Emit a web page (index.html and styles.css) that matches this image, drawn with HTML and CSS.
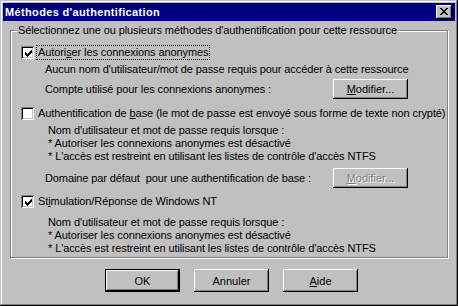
FILE: index.html
```html
<!DOCTYPE html>
<html lang="fr">
<head>
    <meta charset="UTF-8">
    <title>Méthodes d'authentification</title>
    <link rel="stylesheet" href="styles.css">
</head>
<body>

<div class="fenetre">
    <!-- Barre de titre -->
    <div class="titre">
        <span class="titreTexte">Méthodes d'authentification</span>
        <button type="button" class="fermer">
            <svg width="8" height="7" viewBox="0 0 8 7" shape-rendering="crispEdges">
                <path d="M0 0h2v1h-2z M6 0h2v1h-2z M1 1h2v1h-2z M5 1h2v1h-2z M2 2h4v1h-4z M3 3h2v1h-2z M2 4h4v1h-4z M1 5h2v1h-2z M5 5h2v1h-2z M0 6h2v1h-2z M6 6h2v1h-2z" fill="#000"/>
            </svg>
        </button>
    </div>

    <div class="contenu">
        <div class="groupe">
            <span class="legende">Sélectionnez une ou plusieurs méthodes d'authentification pour cette ressource</span>

            <!-- Accès anonyme -->
            <div class="option">
                <span class="case"><svg class="coche" width="7" height="7" viewBox="0 0 7 7" shape-rendering="crispEdges"><path d="M6 0h1v3h-1z M5 1h1v3h-1z M4 2h1v3h-1z M0 2h1v3h-1z M1 3h1v3h-1z M2 4h1v3h-1z M3 3h1v3h-1z" fill="#000"/></svg></span>
                <span class="libelle actif">Autori<u>s</u>er les connexions anonymes</span>
            </div>
            <p class="note">Aucun nom d'utilisateur/mot de passe requis pour accéder à cette ressource</p>
            <div class="ligne">
                <span>Compte utilisé pour les connexions anonymes :</span>
                <button type="button" class="bouton"><u>M</u>odifier...</button>
            </div>

            <!-- Authentification de base -->
            <div class="option option2">
                <span class="case"></span>
                <span class="libelle">Authentification de <u>b</u>ase (le mot de passe est envoyé sous forme de texte non crypté)</span>
            </div>
            <p class="note retrait">Nom d'utilisateur et mot de passe requis lorsque :<br>* Autoriser les connexions anonymes est désactivé<br>* L'accès est restreint en utilisant les listes de contrôle d'accès NTFS</p>
            <div class="ligne retrait domaine">
                <span>Domaine par défaut&nbsp; pour une authentification de base :</span>
                <button type="button" class="bouton inactif" disabled><u>M</u>odifier...</button>
            </div>

            <!-- Windows NT -->
            <div class="option option3">
                <span class="case"><svg class="coche" width="7" height="7" viewBox="0 0 7 7" shape-rendering="crispEdges"><path d="M6 0h1v3h-1z M5 1h1v3h-1z M4 2h1v3h-1z M0 2h1v3h-1z M1 3h1v3h-1z M2 4h1v3h-1z M3 3h1v3h-1z" fill="#000"/></svg></span>
                <span class="libelle">St<u>i</u>mulation/Réponse de Windows NT</span>
            </div>
            <p class="note retrait note3">Nom d'utilisateur et mot de passe requis lorsque :<br>* Autoriser les connexions anonymes est désactivé<br>* L'accès est restreint en utilisant les listes de contrôle d'accès NTFS</p>
        </div>

        <!-- Boutons du bas -->
        <div class="actions">
            <button type="button" class="bouton grand defaut">OK</button>
            <button type="button" class="bouton grand">Annuler</button>
            <button type="button" class="bouton grand"><u>A</u>ide</button>
        </div>
    </div>
</div>

</body>
</html>
```

FILE: styles.css
```css
body {
    margin: 0;
    background-color: #c0c0c0;
    font-family: "Liberation Sans", Arial, sans-serif;
    font-size: 11px;
    line-height: 13px;
    letter-spacing: -0.1px;
    color: #000;
}

.fenetre {
    width: 458px;
    height: 306px;
    box-sizing: border-box;
    padding: 3px;
    background-color: #c0c0c0;
    /* bord 3D de la fenetre */
    box-shadow: inset -1px -1px #000, inset 1px 1px #c0c0c0, inset -2px -2px #808080, inset 2px 2px #fff;
}

.titre {
    height: 18px;
    background-color: #000080;
    display: flex;
    align-items: center;
    justify-content: space-between;
    padding: 0 3px 0 2px;
}

.titreTexte {
    color: #fff;
    font-weight: bold;
    font-size: 11px;
    letter-spacing: 0.35px;
}

.fermer {
    width: 16px;
    height: 14px;
    padding: 0;
    border: none;
    background-color: #c0c0c0;
    display: flex;
    align-items: center;
    justify-content: center;
    box-shadow: inset -1px -1px #000, inset 1px 1px #fff, inset -2px -2px #808080;
}

.fermer svg {
    display: block;
    margin: 0 1px 1px 0;
}

.groupe {
    position: relative;
    margin: 9px 7px 0 7px;
    padding: 14px 0 2px 0;
    border: 1px solid #808080;
    box-shadow: inset 1px 1px #fff, 1px 1px #fff;
}

.legende {
    position: absolute;
    top: -7px;
    left: 6px;
    padding: 0 1px;
    background-color: #c0c0c0;
    white-space: nowrap;
}

.option {
    display: flex;
    align-items: center;
    height: 15px;
}

.option2 {
    margin-top: 7px;
}

.option3 {
    margin-top: 6px;
}

.case {
    flex-shrink: 0;
    width: 13px;
    height: 13px;
    box-sizing: border-box;
    margin-left: 10px;
    background-color: #fff;
    display: flex;
    align-items: center;
    justify-content: center;
    box-shadow: inset 1px 1px #808080, inset -1px -1px #fff, inset 2px 2px #000, inset -2px -2px #c0c0c0;
}

.coche {
    display: block;
    margin: 1px 0 0 1px;
}

.libelle {
    margin-left: 2px;
    padding: 0 1px;
    border: 1px solid transparent;
    white-space: nowrap;
}

.libelle.actif {
    border: 1px dotted #000;
}

.note {
    margin: 3px 0 0 34px;
    white-space: nowrap;
}

.retrait {
    margin-left: 37px;
}

.note3 {
    margin-top: 7px;
}

.ligne {
    display: flex;
    align-items: center;
    justify-content: space-between;
    height: 20px;
    margin: 3px 39px 0 34px;
}

.ligne.domaine {
    margin-top: 5px;
}

.bouton {
    flex-shrink: 0;
    width: 75px;
    height: 20px;
    padding: 0;
    border: none;
    background-color: #c0c0c0;
    font-family: "Liberation Sans", Arial, sans-serif;
    font-size: 11px;
    color: #000;
    box-shadow: inset -1px -1px #000, inset 1px 1px #fff, inset -2px -2px #808080;
}

.bouton.inactif {
    color: #808080;
    text-shadow: 1px 1px #fff;
}

.grand {
    height: 23px;
}

.bouton.defaut {
    border: 1px solid #000;
    box-shadow: inset -1px -1px #000, inset 1px 1px #fff, inset -2px -2px #808080;
}

.actions {
    display: flex;
    justify-content: center;
    gap: 14px;
    margin-top: 11px;
    padding-left: 5px;
}
```
